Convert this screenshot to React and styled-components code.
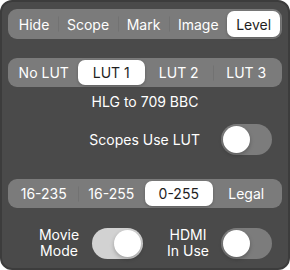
import React, { useState } from "react";
import styled, { createGlobalStyle } from "styled-components";

const Global = createGlobalStyle`
  html, body { margin: 0; padding: 0; background: #ffffff; }
  * { box-sizing: border-box; }
  body { font-family: Inter, "Liberation Sans", Arial, sans-serif; }
`;

const Panel = styled.div`
  width: 290px;
  height: 270px;
  background: #4a4a4a;
  border: 2px solid #3c3c3c;
  border-radius: 12px;
  padding: 7px 6px 0 6px;
  display: flex;
  flex-direction: column;
  color: #ffffff;
  font-size: 14px;
  font-weight: 400;
`;

const Segmented = styled.div`
  display: flex;
  height: ${(p) => p.$height}px;
  margin-top: ${(p) => p.$mt || 0}px;
  background: #7b7b7b;
  border-radius: 9px;
  padding: 2px;
`;

const Seg = styled.div`
  position: relative;
  flex: ${(p) => (p.$auto ? "1 1 auto" : "1 1 0")};
  display: flex;
  align-items: center;
  justify-content: center;
  border-radius: 7px;
  background: ${(p) => (p.$active ? "#ffffff" : "transparent")};
  color: ${(p) => (p.$active ? "#1e1e1e" : "#ffffff")};
  box-shadow: ${(p) => (p.$active ? "0 1px 3px rgba(0,0,0,0.25)" : "none")};
  cursor: pointer;
  &::before {
    content: "";
    position: absolute;
    left: 0;
    top: 50%;
    transform: translateY(-50%);
    width: 1px;
    height: 15px;
    background: #727272;
    display: ${(p) => (p.$divider ? "block" : "none")};
  }
`;

const Caption = styled.div`
  margin-top: 6px;
  height: 18px;
  line-height: 18px;
  text-align: center;
`;

const Row = styled.div`
  display: flex;
  align-items: center;
  justify-content: flex-end;
  margin-top: ${(p) => p.$mt}px;
  padding-right: ${(p) => p.$pr || 0}px;
  gap: ${(p) => p.$gap}px;
`;

const Label = styled.div`
  line-height: 16px;
  text-align: ${(p) => p.$align || "right"};
  width: ${(p) => (p.$w ? p.$w + "px" : "auto")};
  margin-left: ${(p) => p.$ml || 0}px;
  margin-right: ${(p) => p.$mr || 0}px;
`;

const Track = styled.div`
  position: relative;
  width: 51px;
  height: 31px;
  border-radius: 16px;
  background: ${(p) => (p.$on ? "#d2d2d2" : "#7c7c7c")};
  flex: none;
  cursor: pointer;
`;

const Knob = styled.div`
  position: absolute;
  top: 2px;
  left: ${(p) => (p.$on ? "22px" : "2px")};
  width: 27px;
  height: 27px;
  border-radius: 50%;
  background: #ffffff;
  box-shadow: 0 2px 4px rgba(0, 0, 0, 0.25);
`;

function Toggle({ on, onClick }) {
  return (
    <Track $on={on} onClick={onClick}>
      <Knob $on={on} />
    </Track>
  );
}

function Segments({ items, active, height, mt, auto, onSelect }) {
  return (
    <Segmented $height={height} $mt={mt}>
      {items.map((it, i) => {
        const divider = i > 0 && i !== active && i - 1 !== active;
        return (
          <Seg
            key={it}
            $auto={auto}
            $active={i === active}
            $divider={divider}
            onClick={() => onSelect(i)}
          >
            {it}
          </Seg>
        );
      })}
    </Segmented>
  );
}

export default function App() {
  const [tab, setTab] = useState(4);
  const [lut, setLut] = useState(1);
  const [range, setRange] = useState(2);
  const [scopes, setScopes] = useState(false);
  const [movie, setMovie] = useState(true);
  const [hdmi, setHdmi] = useState(false);
  return (
    <>
      <Global />
      <Panel>
        <Segments
          items={["Hide", "Scope", "Mark", "Image", "Level"]}
          active={tab}
          height={30}
          auto
          onSelect={setTab}
        />
        <Segments
          items={["No LUT", "LUT 1", "LUT 2", "LUT 3"]}
          active={lut}
          height={29}
          mt={19}
          onSelect={setLut}
        />
        <Caption>HLG to 709 BBC</Caption>
        <Row $mt={13} $gap={21} $pr={10}>
          <Label>Scopes Use LUT</Label>
          <Toggle on={scopes} onClick={() => setScopes(!scopes)} />
        </Row>
        <Segments
          items={["16-235", "16-255", "0-255", "Legal"]}
          active={range}
          height={29}
          mt={24}
          onSelect={setRange}
        />
        <Row $mt={19} $gap={0} $pr={10}>
          <Label $align="center" $w={50} $mr={8}>
            Movie
            <br />
            Mode
          </Label>
          <Toggle on={movie} onClick={() => setMovie(!movie)} />
          <Label $align="center" $w={50} $mr={8} $ml={20}>
            HDMI
            <br />
            In Use
          </Label>
          <Toggle on={hdmi} onClick={() => setHdmi(!hdmi)} />
        </Row>
      </Panel>
    </>
  );
}
